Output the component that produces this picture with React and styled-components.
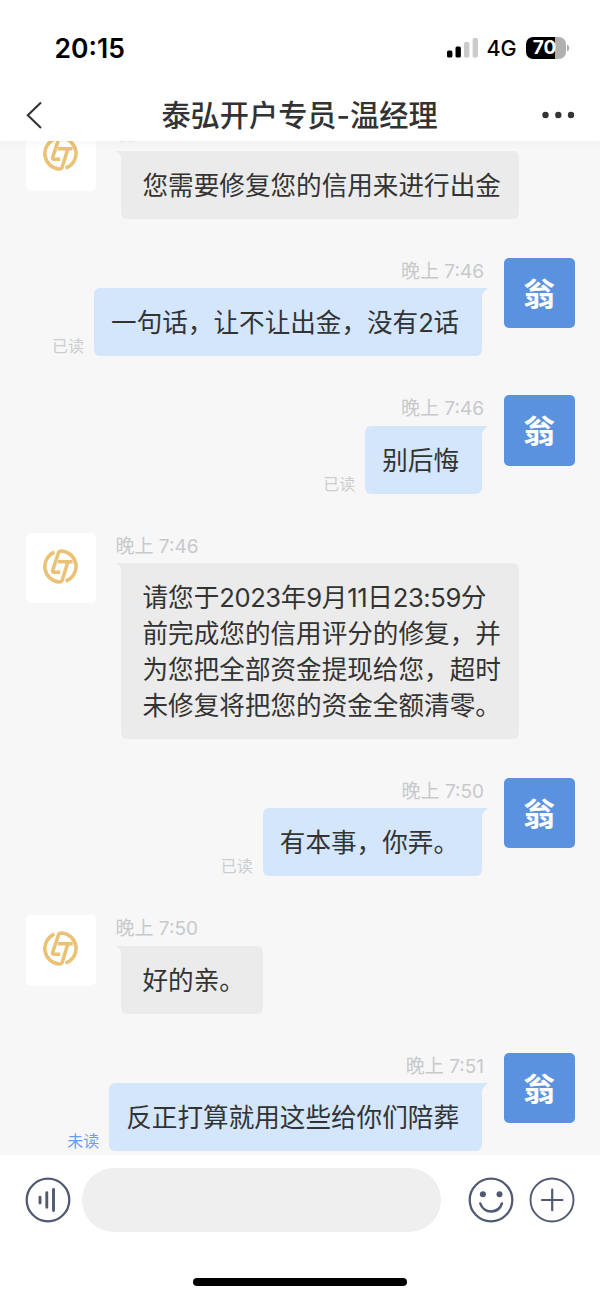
import styled, { createGlobalStyle } from "styled-components";

const messages = [
  { id: 1, time: "晚上 7:46", lines: ["您需要修复您的信用来进行出金"] },
  { id: 2, mine: true, time: "晚上 7:46", lines: ["一句话，让不让出金，没有2话"], status: "已读" },
  { id: 3, mine: true, time: "晚上 7:46", lines: ["别后悔"], status: "已读" },
  {
    id: 4,
    time: "晚上 7:46",
    lines: [
      "请您于2023年9月11日23:59分",
      "前完成您的信用评分的修复，并",
      "为您把全部资金提现给您，超时",
      "未修复将把您的资金全额清零。",
    ],
  },
  { id: 5, mine: true, time: "晚上 7:50", lines: ["有本事，你弄。"], status: "已读" },
  { id: 6, time: "晚上 7:50", lines: ["好的亲。"] },
  { id: 7, mine: true, time: "晚上 7:51", lines: ["反正打算就用这些给你们陪葬"], status: "未读", unread: true },
];

const StatusIcons = () => (
  <StatusRight>
    <svg width="32" height="20" viewBox="0 0 32 20">
      <rect x="0" y="12.5" width="5.4" height="7" rx="1.5" fill="#000" />
      <rect x="8.5" y="8.5" width="5.4" height="11" rx="1.5" fill="#000" />
      <rect x="17" y="4" width="5.4" height="15.5" rx="1.5" fill="#cbcbcb" />
      <rect x="25.6" y="0" width="5.4" height="19.5" rx="1.5" fill="#cbcbcb" />
    </svg>
    <Network>4G</Network>
    <Battery>
      <Level>70</Level>
      <svg width="3" height="8" viewBox="0 0 3 8">
        <path d="M0 0.5C3 1.5 3 6.5 0 7.5z" fill="#b0b0b0" />
      </svg>
    </Battery>
  </StatusRight>
);

const BrandLogo = () => (
  <svg width="35" height="35" viewBox="-52 -52 104 104" fill="none" stroke="#ebc175" strokeWidth="10.5" strokeLinejoin="round">
    <path d="M-1 17H-20Q-25 17 -23 11L-6 -41Q-4 -46 3 -46A46 46 0 0 1 15 43.500" />
    <path d="M-8 -14H36" />
    <path d="M22 -14L5 41Q3 46 -3 46A46 46 0 0 1 -18 -42.500" />
  </svg>
);

// numbers sit tighter than the surrounding chinese text
const renderLine = (line) =>
  line.split(/([\d:]+)/).map((part, i) => (i % 2 ? <Digits key={i}>{part}</Digits> : part));

const Message = ({ mine, time, lines, status, unread }) => (
  <Row $mine={mine}>
    <Avatar $mine={mine}>{mine ? "翁" : <BrandLogo />}</Avatar>
    <Body $mine={mine}>
      <Time $mine={mine}>{time}</Time>
      <BubbleRow>
        {status && <ReadState $unread={unread}>{status}</ReadState>}
        <Bubble $mine={mine}>
          <Tail $mine={mine} width="7" height="7" viewBox="0 0 7 7">
            <path d="M0 0H7V7H5.500Q5.500 4.500 0 0z" fill={mine ? "#d4e6fc" : "#ebebeb"} />
          </Tail>
          {lines.map((line) => (
            <Line key={line}>{renderLine(line)}</Line>
          ))}
        </Bubble>
      </BubbleRow>
    </Body>
  </Row>
);

const App = () => {
  return (
    <>
      <GlobalStyle />
      <Phone>
        <StatusBar>
          <Clock>20:15</Clock>
          <StatusIcons />
        </StatusBar>
        <Header>
          <svg width="18" height="28" viewBox="0 0 18 28" fill="none" stroke="#333" strokeWidth="2.1">
            <path d="M16 1.500L2.800 14.300L16 27" />
          </svg>
          <Title>泰弘开户专员-温经理</Title>
          <svg width="34" height="8" viewBox="0 0 34 8" fill="#333">
            <circle cx="4.500" cy="4" r="3.200" />
            <circle cx="17.300" cy="4" r="3.200" />
            <circle cx="30" cy="4" r="3.200" />
          </svg>
        </Header>
        <Chat>
          {messages.map((m) => (
            <Message key={m.id} {...m} />
          ))}
        </Chat>
        <InputBar>
          <Icon viewBox="0 0 46 46">
            <circle cx="23" cy="23" r="21.300" strokeWidth="2.300" />
            <path d="M15 20.300V26M21.800 15.700V30.300M28.500 12.500V33.500" strokeWidth="2.900" />
          </Icon>
          <Field />
          <Icon viewBox="0 0 46 46">
            <circle cx="23" cy="23" r="21.300" strokeWidth="2.300" />
            <circle cx="14.900" cy="17.200" r="3" fill="#505a70" stroke="none" />
            <circle cx="31.500" cy="17.200" r="3" fill="#505a70" stroke="none" />
            <path d="M12.300 26.500C15.500 37 30.500 37 33.900 26.500" strokeWidth="2.500" />
          </Icon>
          <Icon viewBox="0 0 46 46">
            <circle cx="23" cy="23" r="21.500" strokeWidth="1.900" />
            <path d="M13 23H33.500M23.200 12.700V33.200" strokeWidth="2.200" />
          </Icon>
        </InputBar>
        <HomeArea>
          <HomeIndicator />
        </HomeArea>
      </Phone>
    </>
  );
};

const GlobalStyle = createGlobalStyle`
* {
  box-sizing: border-box;
}
body {
  margin: 0;
  background: #fff;
  font-family: Inter, "Noto Sans CJK SC", sans-serif;
}
svg {
  display: block;
  flex: none;
}
`;

const Phone = styled.div`
  width: 600px;
  height: 1299px;
  display: flex;
  flex-direction: column;
  overflow: hidden;
  background: #fff;
`;

const StatusBar = styled.div`
  height: 88px;
  padding: 7px 30px 0 54.5px;
  display: flex;
  align-items: center;
  justify-content: space-between;
  color: #000;
`;

const Clock = styled.span`
  font-size: 26.5px;
  font-weight: 600;
`;

const StatusRight = styled.div`
  display: flex;
  align-items: center;
`;

const Network = styled.span`
  width: 30px;
  margin: 0 9px 0 8px;
  font-size: 21.5px;
  font-weight: 500;
`;

const Battery = styled.div`
  display: flex;
  align-items: center;
  gap: 1.5px;
`;

const Level = styled.div`
  width: 40px;
  height: 22px;
  padding-right: 2px;
  border-radius: 7px;
  background: linear-gradient(90deg, #000 72%, #b0b0b0 72%);
  color: #fff;
  font-size: 19px;
  font-weight: 700;
  line-height: 22.5px;
  text-align: center;
`;

const Header = styled.header`
  position: relative;
  z-index: 1;
  flex: none;
  height: 53px;
  padding: 0 25px;
  display: flex;
  align-items: center;
  justify-content: space-between;
  background: #fff;
  box-shadow: 0 5px 8px -3px rgba(0, 0, 0, 0.035);
`;

const Title = styled.h1`
  margin: 2px 0 0 15px;
  color: #333;
  font-size: 29.2px;
  font-weight: 500;
  line-height: 40px;
`;

const Chat = styled.main`
  flex: none;
  height: 1014px;
  padding: 0 25.5px 4px;
  display: flex;
  flex-direction: column;
  justify-content: flex-end;
  gap: 39.15px;
  overflow: hidden;
  background: #f7f7f7;
`;

const Row = styled.div`
  display: flex;
  flex: none;
  align-items: flex-start;
  flex-direction: ${({ $mine }) => ($mine ? "row-reverse" : "row")};
`;

const Avatar = styled.div`
  width: 70.5px;
  height: 70.5px;
  flex: none;
  display: flex;
  align-items: center;
  justify-content: center;
  border-radius: 5px;
  padding-bottom: ${({ $mine }) => ($mine ? "2px" : "3px")};
  background: ${({ $mine }) => ($mine ? "#5b92e0" : "#fff")};
  color: #fff;
  font-size: 32px;
  font-weight: 600;
`;

const Body = styled.div`
  display: flex;
  flex-direction: column;
  align-items: ${({ $mine }) => ($mine ? "flex-end" : "flex-start")};
  margin: ${({ $mine }) => ($mine ? "0 22px 0 0" : "0 0 0 25px")};
`;

const Time = styled.div`
  height: 30.5px;
  margin: ${({ $mine }) => ($mine ? "0 -2px 0 0" : "0 0 0 -5.5px")};
  color: #c8c9cc;
  font-size: 19px;
  line-height: 27px;
  white-space: nowrap;
`;

const BubbleRow = styled.div`
  display: flex;
  align-items: flex-end;
`;

const ReadState = styled.span`
  margin-right: 10px;
  color: ${({ $unread }) => ($unread ? "#6b9cf5" : "#cccdd0")};
  font-size: 16px;
  line-height: 20px;
`;

const Bubble = styled.div`
  position: relative;
  padding: ${({ $mine }) => ($mine ? "17px 23px 15px 17px" : "17px 18.5px 15px 21.5px")};
  border-radius: ${({ $mine }) => ($mine ? "6px 0 6px 6px" : "0 6px 6px 6px")};
  background: ${({ $mine }) => ($mine ? "#d4e6fc" : "#ebebeb")};
`;

const Tail = styled.svg`
  position: absolute;
  top: 0;
  ${({ $mine }) => ($mine ? "right: -5.5px; transform: scaleX(-1);" : "left: -5.5px;")}
`;

const Line = styled.div`
  color: #333;
  font-size: 25.6px;
  line-height: 35.85px;
  white-space: nowrap;
`;

const Digits = styled.span`
  letter-spacing: -0.45px;
`;

const InputBar = styled.footer`
  height: 90px;
  padding: 0 25px;
  display: flex;
  align-items: center;
`;

const Field = styled.div`
  width: 359.5px;
  height: 63.5px;
  margin: 0 27px 0 11px;
  border-radius: 32px;
  background: #efefef;
`;

const Icon = styled.svg`
  width: 46px;
  height: 46px;
  fill: none;
  stroke: #505a70;
  stroke-linecap: round;

  & + & {
    margin-left: 15px;
  }
`;

const HomeArea = styled.div`
  flex: 1;
  display: flex;
  justify-content: center;
  align-items: flex-end;
  padding-bottom: 13px;
`;

const HomeIndicator = styled.div`
  width: 214px;
  height: 8px;
  border-radius: 4px;
  background: #000;
`;

export default App;
